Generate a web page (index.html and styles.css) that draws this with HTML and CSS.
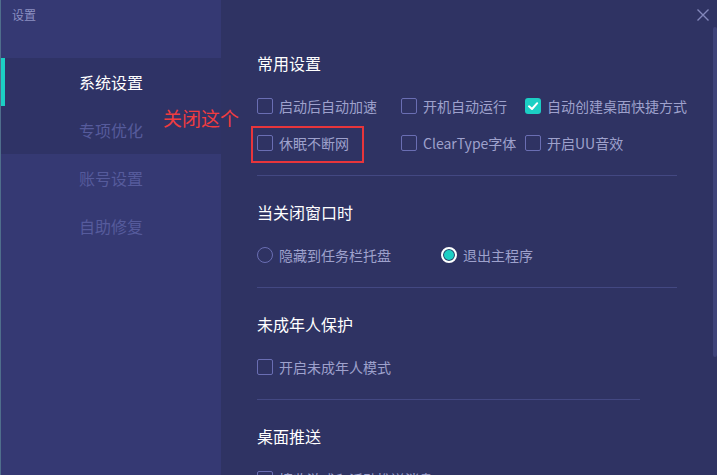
FILE: index.html
```html
<!DOCTYPE html>
<html lang="zh">
<head>
<meta charset="utf-8">
<title>设置</title>
<link rel="stylesheet" href="styles.css">
</head>
<body>
<div class="window">
  <aside class="sidebar">
    <div class="win-title">设置</div>
    <nav class="menu">
      <div class="menu-item active">系统设置</div>
      <div class="menu-item hover">专项优化</div>
      <div class="menu-item">账号设置</div>
      <div class="menu-item">自助修复</div>
    </nav>
  </aside>
  <main class="content">
    <section class="section">
      <h2 class="heading">常用设置</h2>
      <div class="grid3">
        <label class="opt"><span class="cb"></span>启动后自动加速</label>
        <label class="opt"><span class="cb"></span>开机自动运行</label>
        <label class="opt"><span class="cb checked"><svg viewBox="0 0 16 16" width="16" height="16"><path d="M4 8.3 L7 11 L12.2 5.2" fill="none" stroke="#fff" stroke-width="2" stroke-linecap="round" stroke-linejoin="round"/></svg></span>自动创建桌面快捷方式</label>
        <label class="opt"><span class="cb"></span>休眠不断网</label>
        <label class="opt"><span class="cb"></span>ClearType字体</label>
        <label class="opt"><span class="cb"></span>开启UU音效</label>
      </div>
    </section>
    <section class="section">
      <h2 class="heading">当关闭窗口时</h2>
      <div class="grid2">
        <label class="opt"><span class="radio"></span>隐藏到任务栏托盘</label>
        <label class="opt"><span class="radio on"></span>退出主程序</label>
      </div>
    </section>
    <section class="section short">
      <h2 class="heading">未成年人保护</h2>
      <div class="grid2">
        <label class="opt"><span class="cb"></span>开启未成年人模式</label>
      </div>
    </section>
    <section class="section last">
      <h2 class="heading">桌面推送</h2>
      <div class="grid2">
        <label class="opt"><span class="cb"></span>接收游戏和活动推送消息</label>
      </div>
    </section>
  </main>
  <div class="close"><svg viewBox="0 0 12 12" width="12" height="12"><path d="M0.5 0.5 L11.5 11.5 M11.5 0.5 L0.5 11.5" stroke="#8387ba" stroke-width="1.4" fill="none"/></svg></div>
  <div class="scroll-thumb"></div>
  <div class="annot-box"></div>
  <div class="annot-text">关闭这个</div>
</div>
</body>
</html>
```

FILE: styles.css
```css
* { box-sizing: border-box; }
html, body { margin: 0; padding: 0; }
body {
  width: 717px;
  height: 475px;
  overflow: hidden;
  background: #2f3363;
  font-family: "Noto Sans CJK SC", "Microsoft YaHei", sans-serif;
}
.window {
  position: relative;
  display: flex;
  width: 717px;
  height: 475px;
  background: #2f3363;
  overflow: hidden;
}
.sidebar {
  width: 221px;
  flex: none;
  background: #353973;
  border-left: 1px solid #4f6e8c;
  display: flex;
  flex-direction: column;
}
.win-title {
  height: 58px;
  padding: 7px 0 0 11px;
  font-size: 12px;
  line-height: 16px;
  color: #8c90c2;
}
.menu { display: flex; flex-direction: column; }
.menu-item {
  height: 48px;
  line-height: 48px;
  padding-left: 78px;
  font-size: 16px;
  color: #565b9c;
}
.menu-item.active {
  background: #2f3366;
  color: #ffffff;
  box-shadow: inset 4px 0 0 #1ccfc4;
}
.menu-item.hover { background: #2f3366; }
.content {
  flex: 1;
  padding: 27px 0 0 36px;
  display: flex;
  flex-direction: column;
}
.section {
  width: 420px;
  padding: 25px 0 21px;
  border-bottom: 1px solid #434882;
}
.section.short { width: 383px; }
.section.last { border-bottom: none; }
.heading {
  margin: 0 0 21px;
  font-size: 16px;
  font-weight: normal;
  line-height: 22px;
  color: #ffffff;
}
.grid3 {
  display: grid;
  grid-template-columns: 144px 124px auto;
  row-gap: 15px;
}
.grid2 {
  display: grid;
  grid-template-columns: 184px auto;
  row-gap: 15px;
}
.opt {
  display: flex;
  align-items: center;
  height: 22px;
  font-size: 14px;
  color: #9ea1cc;
  white-space: nowrap;
}
.cb {
  width: 16px;
  height: 16px;
  flex: none;
  margin-right: 6px;
  border: 1px solid #6a6eb3;
  border-radius: 2px;
  display: flex;
}
.cb.checked {
  border: none;
  background: #1ccfc4;
  border-radius: 3px;
}
.radio {
  width: 16px;
  height: 16px;
  flex: none;
  margin-right: 6px;
  border: 1px solid #6a6eb3;
  border-radius: 50%;
}
.radio.on {
  border: 2px solid #ffffff;
  background: #1ccfc4;
  box-shadow: inset 0 0 0 1px #2f3363;
}
.close {
  position: absolute;
  left: 697px;
  top: 9px;
  width: 12px;
  height: 12px;
  display: flex;
}
.scroll-thumb {
  position: absolute;
  left: 713px;
  top: 27px;
  width: 4px;
  height: 330px;
  border-radius: 2px;
  background: #3e4379;
}
.annot-box {
  position: absolute;
  left: 251px;
  top: 126px;
  width: 113px;
  height: 37px;
  border: 2px solid #e8353b;
}
.annot-text {
  position: absolute;
  left: 163px;
  top: 105px;
  font-size: 19px;
  line-height: 26px;
  color: #f03c3f;
}
```
